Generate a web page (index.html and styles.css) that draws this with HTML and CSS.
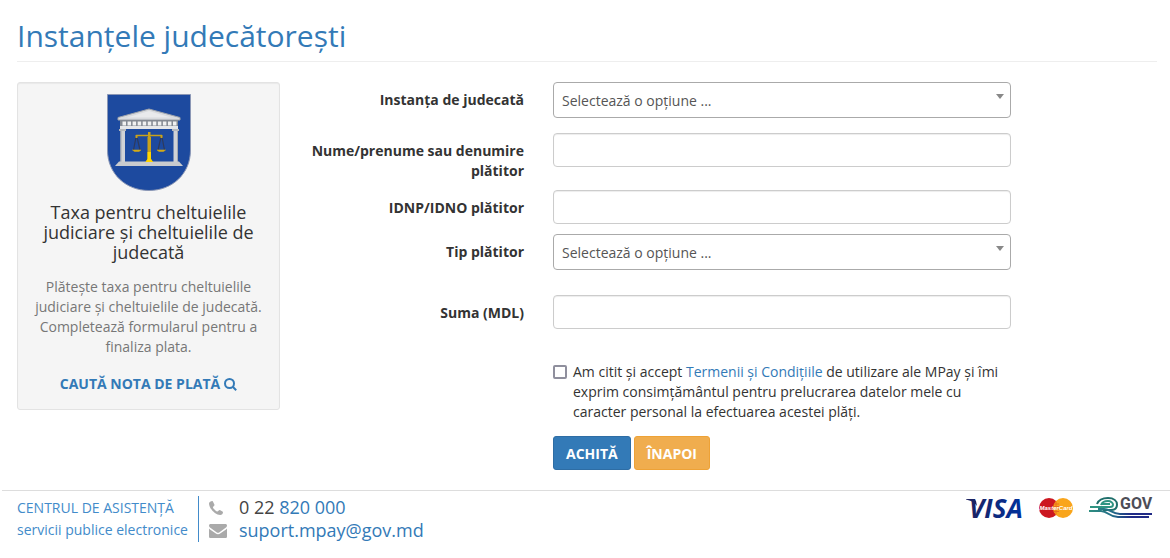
FILE: index.html
```html
<!DOCTYPE html>
<html lang="ro">
<head>
  <meta charset="UTF-8">
  <meta name="viewport" content="width=device-width, initial-scale=1">
  <title>Instanțele judecătorești</title>
  <link rel="stylesheet" href="styles.css">
</head>
<body>
  <header class="page-header">
    <h1>Instanțele judecătorești</h1>
  </header>

  <main class="content">
    <aside class="service">
      <svg class="service-logo" viewBox="0 0 84 97" aria-hidden="true">
        <path d="M.5.5h83V56C83.500 80 65 96.500 42 96.500S.5 80 .5 56Z" fill="#1d4a9f" stroke="#8b97b5"/>
        <path d="M42 15 73 23.500v2.500H11v-2.500Z" fill="#d9dbde" stroke="#9ea3ab"/>
        <path d="M42 17 64 23.500H20Z" fill="#e9eaec"/>
        <path d="M13 26h58v7H13Z" fill="#858a93"/>
        <path d="M15.500 29.500h54" stroke="#f1f1f1" stroke-width="4" stroke-dasharray="3.500 1.550"/>
        <path d="M13 32h58v3H13Z" fill="#e6e7e9"/>
        <path d="M12 35h7v2h-7zM65 35h7v2h-7z" fill="#b5b8bd"/>
        <path d="M13.500 37h4.500v31h-4.500zM66.500 37H71v31h-4.500z" fill="#d0d2d6"/>
        <path d="M14 37v31M70.500 37v31" stroke="#a5a9b0"/>
        <path d="M12 67.500h60l4 4.500H8Z" fill="#c9cbce"/>
        <path d="M29 43 26.500 56M30 43l3 13M54 43l-3 13M55 43l2.500 13" stroke="#2e3a5c" stroke-width="1.200"/>
        <path d="M29 41.500h26" stroke="#c9a21a" stroke-width="1.500"/>
        <path d="M29.500 41v3M54.500 41v3" stroke="#c9a21a" stroke-width="2"/>
        <path d="M25.500 56h8.500l-2 1.500h-4.500ZM50 56h8.500l-2 1.500H52Z" fill="#d8b01a" stroke="#c9a21a" stroke-width=".6"/>
        <path d="M41 38h2.500v5h.5v22l2 3h-7.500l2-3V43h.5Z" fill="#c9a21a"/>
        <path d="M40.500 58h3.500v7l2 3h-7.500l2-3Z" fill="#ffd500"/>
      </svg>
      <h2>Taxa pentru cheltuielile judiciare și cheltuielile de judecată</h2>
      <p>Plătește taxa pentru cheltuielile judiciare și cheltuielile de judecată. Completează formularul pentru a finaliza plata.</p>
      <a class="search-link" href="#">CAUTĂ NOTA DE PLATĂ
        <svg class="search-icon" viewBox="0 0 13 13" aria-hidden="true">
          <circle cx="5.500" cy="5.500" r="4.500"/>
          <path d="m9 9 3.200 3.200"/>
        </svg>
      </a>
    </aside>

    <form class="payment">
      <div class="row row-select">
        <label for="court">Instanța de judecată</label>
        <div class="select">
          <select id="court">
            <option>Selectează o opțiune ...</option>
          </select>
        </div>
      </div>
      <div class="row">
        <label for="payer">Nume/prenume sau denumire plătitor</label>
        <input type="text" id="payer">
      </div>
      <div class="row">
        <label for="idnp">IDNP/IDNO plătitor</label>
        <input type="text" id="idnp">
      </div>
      <div class="row row-type">
        <label for="payerType">Tip plătitor</label>
        <div class="select">
          <select id="payerType">
            <option>Selectează o opțiune ...</option>
          </select>
        </div>
      </div>
      <div class="row">
        <label for="amount">Suma (MDL)</label>
        <input type="text" id="amount">
      </div>
      <div class="row row-end">
        <div class="terms">
          <input type="checkbox" id="terms">
          <label for="terms">Am citit și accept <a href="#">Termenii și Condițiile</a> de utilizare ale MPay și îmi exprim consimțământul pentru prelucrarea datelor mele cu caracter personal la efectuarea acestei plăți.</label>
        </div>
        <div class="buttons">
          <button type="submit" class="btn btn-primary">ACHITĂ</button>
          <button type="button" class="btn btn-warning">ÎNAPOI</button>
        </div>
      </div>
    </form>
  </main>

  <footer class="footer">
    <div class="support">
      <p>CENTRUL DE ASISTENȚĂ</p>
      <p>servicii publice electronice</p>
    </div>
    <ul class="contacts">
      <li>
        <svg class="contact-icon" viewBox="0 0 18 18" aria-hidden="true">
          <path d="M0 4.500C0 3 2 2 3.200 2c.6 0 .8.6 2.300 3.700.5 1-1.600 1.800-1.600 2.600 0 .9 3.200 4.200 4.400 4.200.8 0 1.700-1.800 2.500-1.500C13.700 12.500 14 12.700 14 13.300c0 1.500-1.200 2.700-2.800 2.700C6.500 16 0 9.500 0 4.500Z"/>
        </svg>
        <span>0 22 <a href="tel:022820000">820 000</a></span>
      </li>
      <li>
        <svg class="contact-icon" viewBox="0 0 18 18" aria-hidden="true">
          <path d="M0 3.500C0 2.700.7 2 1.500 2h15c.8 0 1.500.7 1.500 1.500 0 1-.7 1.900-1.700 2.600L10.500 10.200c-1 .7-2 .7-3 0L1.700 6.100C.7 5.400 0 4.600 0 3.500ZM0 6.500c.3.300.7.600 1 .9l5.500 3.900c1.700 1.200 3.300 1.200 5 0L17 7.400c.3-.3.700-.6 1-.9v7.900c0 .9-.7 1.600-1.600 1.600H1.600C.7 16 0 15.300 0 14.400Z"/>
        </svg>
        <a href="mailto:suport.mpay@gov.md">suport.mpay@gov.md</a>
      </li>
    </ul>
    <div class="partners">
      <svg class="logo-visa" viewBox="0 0 68 38" role="img" aria-label="Visa">
        <defs>
          <linearGradient id="visaFill">
            <stop offset="0" stop-color="#1c2260"/>
            <stop offset="1" stop-color="#00329e"/>
          </linearGradient>
        </defs>
        <path d="M8 10h8l2 2 1 5c-3-4-6-5.500-11-6.500Z" fill="#1c2260"/>
        <text x="11" y="29" class="visa-text" fill="url(#visaFill)">VISA</text>
      </svg>
      <svg class="logo-mastercard" viewBox="0 0 36 22" role="img" aria-label="MasterCard">
        <circle cx="11" cy="11" r="10" fill="#cc1720"/>
        <circle cx="25" cy="11" r="10" fill="#f9a51b"/>
        <path d="M18 4.500v13M16 7h5M15.500 9.500h6M15.500 12h6M16 14.500h5" stroke="#e8701c"/>
        <text x="18" y="13" class="mastercard-text">MasterCard</text>
      </svg>
      <svg class="logo-egov" viewBox="-3 0 67 28" role="img" aria-label="eGov">
        <defs>
          <linearGradient id="egovLine" gradientUnits="userSpaceOnUse" x1="0" y1="0" x2="60" y2="0">
            <stop offset="0" stop-color="#2f8f80"/>
            <stop offset=".4" stop-color="#226a88"/>
            <stop offset=".7" stop-color="#202a86"/>
          </linearGradient>
        </defs>
        <g fill="none" stroke-width="2">
          <path d="M8 10C10 5 15 4 19 4c6 0 9 3 9 6.500S26 16 22 16h-8" stroke="#1f6f6b"/>
          <path d="M12 11c1-3 4-4 7-4s5 2 5 3.500S23 13 21 13H1" stroke="#2f9482"/>
          <path d="M13 10h8" stroke="#2f9482"/>
          <path d="M0 17h12c7 0 8 6 17 6h31" stroke="url(#egovLine)"/>
          <path d="M9 15h6c6 0 8 5 16 5h32" stroke="url(#egovLine)"/>
        </g>
        <text x="31" y="15" class="egov-text">GOV</text>
      </svg>
    </div>
  </footer>
</body>
</html>
```
FILE: styles.css
```css
* {
  box-sizing: border-box;
}

body {
  margin: 0;
  font-family: 'Open Sans', 'Helvetica Neue', Arial, sans-serif;
  font-size: 14px;
  line-height: 20px;
  color: #333;
  background-color: #fff;
}

a {
  color: #337ab7;
  text-decoration: none;
}

a:hover {
  text-decoration: underline;
}

.page-header {
  margin: 19px 13px 20px 17px;
  padding-bottom: 9px;
  border-bottom: 1px solid #eee;
}

.page-header h1 {
  margin: 0;
  font-size: 30px;
  font-weight: 400;
  line-height: 33px;
  color: #337ab7;
}

.content {
  display: grid;
  grid-template-columns: 263fr 847fr;
  gap: 30px;
  align-items: start;
  padding: 0 13px 0 17px;
}

/* service card */
.service {
  padding: 11px 15px 15px;
  text-align: center;
  background-color: #f5f5f5;
  border: 1px solid #e3e3e3;
  border-radius: 3px;
  box-shadow: inset 0 1px 1px rgba(0, 0, 0, 0.05);
}

.service-logo {
  display: block;
  width: 84px;
  height: 97px;
  margin: 0 auto 11px;
}

.service h2 {
  margin: 0 0 15px;
  font-size: 18px;
  font-weight: 400;
  line-height: 20px;
}

.service p {
  margin: 0 0 17px;
  color: #777;
}

.search-link {
  display: flex;
  justify-content: center;
  align-items: center;
  gap: 4px;
  font-weight: 700;
}

.search-icon {
  width: 13px;
  height: 13px;
  fill: none;
  stroke: #337ab7;
  stroke-width: 2;
}

/* payment form */
.row {
  display: grid;
  grid-template-columns: 214fr 458fr 117fr;
  column-gap: 29px;
  align-items: start;
  margin-bottom: 10px;
}

.row > label {
  margin-bottom: -1px;
  padding-top: 8px;
  font-weight: 700;
  text-align: right;
}

.row-select {
  margin-bottom: 15px;
}

.row-type {
  margin-bottom: 25px;
}

.row-end {
  margin: 33px 0 0;
}

.row-end > div {
  grid-column: 2;
}

input[type="text"] {
  width: 100%;
  height: 34px;
  padding: 6px 12px;
  font: inherit;
  color: #555;
  background-color: #fff;
  border: 1px solid #ccc;
  border-radius: 4px;
  box-shadow: inset 0 1px 1px rgba(0, 0, 0, 0.075);
}

.select {
  position: relative;
}

.select::after {
  content: "";
  position: absolute;
  top: 12px;
  right: 7px;
  border: 4px solid transparent;
  border-top: 5px solid #888;
  border-bottom: 0;
  pointer-events: none;
}

.select select {
  display: block;
  width: 100%;
  height: 36px;
  padding: 2px 20px 0 8px;
  font: inherit;
  color: #555;
  background-color: #fff;
  border: 1px solid #aaa;
  border-radius: 4px;
  appearance: none;
}

.terms {
  display: flex;
  align-items: flex-start;
  gap: 6px;
}

.terms input {
  flex: none;
  width: 14px;
  height: 14px;
  margin: 3px 0 0;
  background-color: #fff;
  border: 2px solid #8f8f9d;
  border-radius: 2px;
  appearance: none;
}

.terms input:checked {
  background-color: #337ab7;
}

.buttons {
  display: flex;
  gap: 3px;
  margin-top: 14px;
}

.btn {
  padding: 7px 12px 5px;
  font: inherit;
  font-weight: 700;
  color: #fff;
  border: 1px solid;
  border-radius: 3px;
  cursor: pointer;
}

.btn-primary {
  background-color: #337ab7;
  border-color: #2e6da4;
}

.btn-warning {
  background-color: #f0ad4e;
  border-color: #eea236;
}

/* footer */
.footer {
  display: flex;
  align-items: flex-start;
  margin: 20px 0 0 2px;
  padding: 5px 17px 0 15px;
  border-top: 1px solid #ddd;
}

.support {
  padding: 1px 10px 1px 0;
  line-height: 22px;
  color: #428bca;
  border-right: 1px solid #428bca;
}

.support p {
  margin: 0;
}

.contacts {
  margin: 0;
  padding: 0 0 0 10px;
  list-style: none;
  font-size: 18px;
  line-height: 23px;
  color: #444;
}

.contacts li {
  display: flex;
  align-items: center;
  gap: 12px;
}

.contact-icon {
  width: 18px;
  height: 18px;
  fill: #aaa;
}

.partners {
  display: flex;
  align-items: center;
  gap: 12px;
  margin: -7px 0 0 auto;
}

.logo-visa {
  width: 68px;
  height: 38px;
}

.visa-text {
  font-family: 'Open Sans', sans-serif;
  font-size: 26px;
  font-style: italic;
  font-weight: 700;
}

.logo-mastercard {
  width: 36px;
  height: 22px;
}

.mastercard-text {
  font-family: 'Liberation Sans', Arial, sans-serif;
  font-size: 6px;
  font-style: italic;
  font-weight: 700;
  text-anchor: middle;
  fill: #fff;
}

.logo-egov {
  width: 67px;
  height: 28px;
}

.egov-text {
  font-family: Roboto, Arial, sans-serif;
  font-size: 16px;
  font-weight: 700;
  fill: #4d4d57;
}
```
